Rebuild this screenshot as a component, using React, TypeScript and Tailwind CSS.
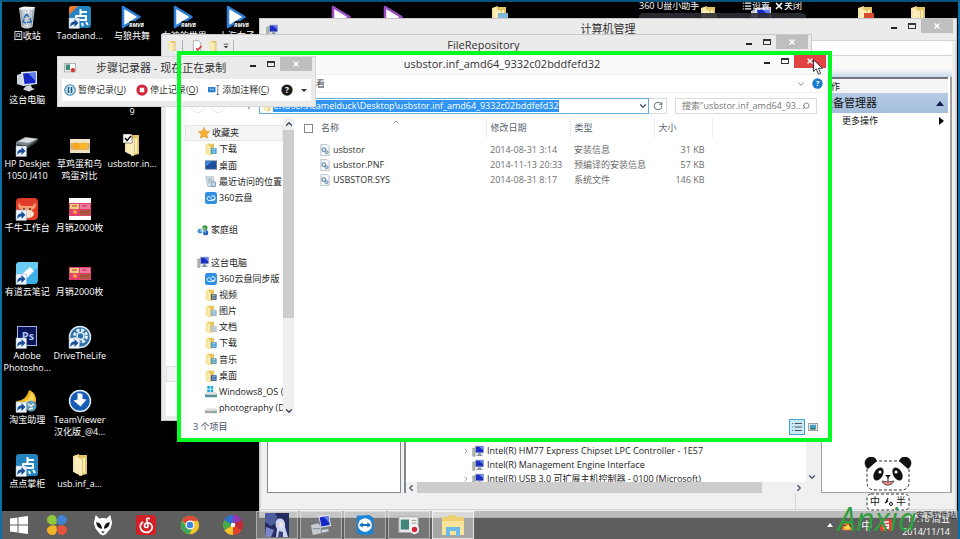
import type { ReactNode } from 'react';
import { ChevronDown, ChevronLeft, ChevronRight, ChevronUp, List, RotateCw, Search, X, ArrowLeft, ArrowRight, ArrowUp } from 'lucide-react';

interface DesktopItem {
    label: string;
    icon: ReactNode;
}

interface TreeItem {
    label: string;
    icon: ReactNode;
    level: number;
}

interface FileRow {
    name: string;
    date: string;
    type: string;
    size: string;
}

const Shortcut = () => (
    <g>
        <rect x="1" y="13" width="10.500" height="10.500" fill="#eef4fa" stroke="#9ab" strokeWidth="0.5" />
        <path d="M2.500 22c-.5-4 1-5.500 4-5.500v-2.500l4 4-4 4v-2.500C5 19.500 3.500 20 2.500 22z" fill="#1b4f9c" />
    </g>
);

const RecycleBin = () => (
    <svg viewBox="0 0 24 24" className="size-6">
        <path d="M4 3l16-1-2.500 20-4 1.500h-4L6.500 22z" fill="#c3ccd2" />
        <path d="M4 3l5-1.500 11 .5-3 2.500-9 .5z" fill="#f2f5f7" />
        <path d="M5.500 5l2.500 16M18.500 5L16 21" stroke="#8b979f" strokeWidth="1" />
        <path d="M9 13l2.500-4 2.500 3M15 13l1 4-4 .5M11 18l-3-1 1-3" fill="none" stroke="#3273b5" strokeWidth="1.600" />
        <path d="M10 6l1 3M14 5l-1 3M12 20v2" stroke="#eef3f6" strokeWidth="1.500" />
    </svg>
);

const DianIcon = ({ ribbon }: { ribbon?: boolean }) => (
    <svg viewBox="0 0 24 24" className="size-6">
        <rect x="1" y="1" width="22" height="22" rx="3" fill="#2384bf" />
        <path d="M12.500 4v7M13 7h6M8 11h10v4H8zM14 18l1 3M18 17l2 3" fill="none" stroke="#fff" strokeWidth="2" strokeLinejoin="round" />
        {ribbon && <path d="M1 10V4a3 3 0 0 1 3-3h6z" fill="#ef7b2b" />}
        <Shortcut />
    </svg>
);

const VideoIcon = ({ color }: { color: string }) => (
    <svg viewBox="0 0 24 24" className="size-6">
        <path d="M3 2l16.500 10L3 22z" fill="#fff" stroke={color} strokeWidth="2.500" strokeLinejoin="round" />
        <path d="M10 16h14v6H8z" fill="#101010" />
        <text x="16.500" y="21.500" fontSize="5.500" fontStyle="italic" fontWeight="700" textAnchor="middle" fill="#fff">RMVB</text>
    </svg>
);

const ComputerIcon = ({ className = 'size-6' }: { className?: string }) => (
    <svg viewBox="0 0 24 24" className={className}>
        <path d="M2 6l6-2v13l-6-2z" fill="#cdd3da" />
        <path d="M6 3l16-1v13L8 17z" fill="#dfe5ea" />
        <path d="M8 4.500l12.500-1v10.500L9.500 15z" fill="#1427c4" />
        <path d="M13 4l7.500-.5V12z" fill="#5f7df0" />
        <path d="M11 17l5-1 1 3 3 1-6 2.500-6-2z" fill="#d2d7dd" />
    </svg>
);

const SmallComputerIcon = () => (
    <svg viewBox="0 0 16 16" className="size-3">
        <path d="M1 4h3v11H1z" fill="#b9c0b4" stroke="#7e857a" strokeWidth="0.800" />
        <rect x="4.500" y="1.500" width="11" height="9" fill="#1c2fc0" stroke="#a8b4c6" />
        <path d="M9 2h6v5z" fill="#6f8af0" />
        <path d="M8 11h4v2h2v1.500H6V13h2z" fill="#8c96a2" />
    </svg>
);

const PrinterIcon = () => (
    <svg viewBox="0 0 24 24" className="size-6">
        <path d="M1 9l9-5 13 1.500-1 3-10 7-11-2z" fill="#7e858a" />
        <path d="M3 8.500l8-4 11 1.500-9 4z" fill="#d9dde0" />
        <path d="M2 12l11 1.500 9-6" stroke="#2c3033" strokeWidth="1.300" fill="none" />
        <Shortcut />
    </svg>
);

const EggPhoto = () => (
    <svg viewBox="0 0 24 24" className="size-6">
        <rect x="2" y="6" width="20" height="14" fill="#d9b27c" />
        <rect x="2" y="6" width="20" height="4" fill="#f1e4cc" />
        <ellipse cx="8.500" cy="13" rx="4" ry="3.500" fill="#f4a71d" />
        <ellipse cx="15.500" cy="13" rx="4" ry="3.500" fill="#f9b827" />
        <path d="M2 17h20v3H2z" fill="#efe0c2" />
    </svg>
);

const FolderIcon = ({ checked, accent, className = 'size-6' }: { checked?: boolean; accent?: string; className?: string }) => (
    <svg viewBox="0 0 24 24" className={className}>
        <path d="M5 3l6-2v20l-6-2z" fill="#f5e3a0" />
        <path d="M10 2h9v19l-8 2z" fill="#e3c568" />
        <path d="M7 4l7 2v17l-7-3z" fill="#faedb9" />
        <path d="M15 5h2v15h-2z" fill="#f9efc8" />
        {accent && <path d="M11 8h10v12H11z" fill={accent} />}
        {checked && (
            <g>
                <rect x="3" y="1" width="9" height="9" fill="#fff" stroke="#222" strokeWidth="0.500" />
                <path d="M5 5l2 2.500L11 3" fill="none" stroke="#111" strokeWidth="1.500" />
            </g>
        )}
    </svg>
);

const BullIcon = () => (
    <svg viewBox="0 0 24 24" className="size-6">
        <rect x="1" y="1" width="22" height="22" rx="4" fill="#e03b2b" />
        <path d="M4 5c1 4 3 4 5 4h6c2 0 4 0 5-4 2 4 0 7-3 8l-1 6H8l-1-6C4 12 2 9 4 5z" fill="#f5a070" />
        <ellipse cx="13" cy="17" rx="6" ry="4" fill="#fbe0cd" />
        <path d="M8 12h2M14 12h2" stroke="#5c2012" strokeWidth="1.500" />
        <Shortcut />
    </svg>
);

const PosterIcon = ({ tall }: { tall?: boolean }) => (
    <svg viewBox="0 0 24 24" className="size-6">
        {tall && <rect x="1" y="1" width="22" height="22" fill="#fff" />}
        <rect x="1" y="6" width="22" height="13" fill="#e2416f" />
        <rect x="2" y="7" width="9" height="5" fill="#f1d27a" />
        <rect x="12" y="7" width="10" height="5" fill="#f07aa0" />
        <rect x="12" y="13" width="10" height="5" fill="#a0603c" />
        <circle cx="7" cy="15" r="2" fill="#f4a43c" />
        <path d="M4 9h5M14 9h5M13 15h8" stroke="#c42c50" strokeWidth="1" />
    </svg>
);

const NoteIcon = () => (
    <svg viewBox="0 0 24 24" className="size-6">
        <path d="M5 1h18v18a4 4 0 0 1-4 4H1V5a4 4 0 0 1 4-4z" fill="#3bb1e8" />
        <path d="M5 1h18v6L1 17V5a4 4 0 0 1 4-4z" fill="#6accf3" />
        <path d="M15 6l4 4-8 8-5-4z" fill="#fff" />
        <Shortcut />
    </svg>
);

const PhotoshopIcon = () => (
    <svg viewBox="0 0 24 24" className="size-6">
        <rect x="2.500" y="1.500" width="19" height="19" fill="#0c1459" stroke="#9fb4ea" strokeWidth="1" />
        <text x="13" y="15" fontSize="11" fontWeight="700" textAnchor="middle" fill="#a9c3f7" fontFamily="Open Sans">Ps</text>
        <Shortcut />
    </svg>
);

const DriveIcon = () => (
    <svg viewBox="0 0 24 24" className="size-6">
        <circle cx="12" cy="12" r="10.500" fill="#2d74ae" stroke="#dce9f3" strokeWidth="1.500" />
        <circle cx="12.500" cy="11" r="6" fill="none" stroke="#e6f0f8" strokeWidth="3" strokeDasharray="3 1.700" />
        <circle cx="12.500" cy="11" r="3.500" fill="none" stroke="#e6f0f8" strokeWidth="1.500" />
        <Shortcut />
    </svg>
);

const HelperIcon = () => (
    <svg viewBox="0 0 24 24" className="size-6">
        <path d="M1 12C8 12 12 8 14 1c6 2 9 9 6 14l-6 3-10-1z" fill="#f4b41d" />
        <path d="M9 12c5-1 7-5 7-9 4 4 4 8 1 12z" fill="#ffd95b" />
        <circle cx="16" cy="17" r="5.500" fill="#5e9cc7" />
        <path d="M13 15l3 2 3-2M14 20l4-1" stroke="#fff3c4" strokeWidth="1.500" fill="none" />
        <Shortcut />
    </svg>
);

const RemoteIcon = () => (
    <svg viewBox="0 0 24 24" className="size-6">
        <circle cx="12" cy="12" r="10.500" fill="#155cb5" stroke="#dfe9f5" strokeWidth="1.500" />
        <path d="M9.500 4l5 1v5l4 .5-6 7-7-6 4-1z" fill="#fff" />
    </svg>
);

const CloudDiskIcon = () => (
    <svg viewBox="0 0 16 16" className="size-3">
        <rect width="16" height="16" rx="3" fill="#2f8fe2" />
        <path d="M13 9.500A3 3 0 0 1 8.500 9L7 7a2.500 2.500 0 1 0-1.500 4.200h5A3 3 0 0 0 10.500 5C9 5 8 6 8 6" fill="none" stroke="#fff" strokeWidth="1.300" />
    </svg>
);

const StarIcon = () => (
    <svg viewBox="0 0 16 16" className="size-3">
        <path d="M8 0.500l2.300 5 5.200.6-3.900 3.600 1.100 5.300L8 12.300 3.300 15l1.100-5.300L.5 6.100l5.200-.6z" fill="#f8b52c" stroke="#db8a1a" strokeWidth="0.800" />
    </svg>
);

const TreeFolder = ({ color }: { color: string }) => (
    <svg viewBox="0 0 16 16" className="size-3">
        <path d="M1 1.500L6 0v16l-5-1.500z" fill="#f6e193" />
        <path d="M5 1h7v13.500L5 16z" fill="#e6c35c" />
        <path d="M3 3l4 1v11.500L3 14z" fill="#f9eaae" />
        <path d="M8 7h7.500v7.500H8z" fill={color} />
        <path d="M9.500 9h4.500M9.500 12h4.500" stroke="#dce8f2" strokeWidth="1" />
    </svg>
);

const ScreenIcon = () => (
    <svg viewBox="0 0 16 16" className="size-3">
        <rect x="0.500" y="2.500" width="15" height="11" fill="#1d4f9e" stroke="#5b7390" strokeWidth="1" />
        <path d="M1 3h9l-9 7z" fill="#3d86d8" />
    </svg>
);

const RecentIcon = () => (
    <svg viewBox="0 0 16 16" className="size-3">
        <path d="M1 1h10l1 13H4z" fill="#dbe6ee" stroke="#8da2b2" strokeWidth="0.800" />
        <path d="M3.500 4h6M4 6.500h6M4.500 9h3" stroke="#7f97a8" />
        <path d="M9 8h5v6H8z" fill="#c2dcec" stroke="#6d8ea6" />
    </svg>
);

const HomegroupIcon = () => (
    <svg viewBox="0 0 16 16" className="size-3">
        <circle cx="10.500" cy="5" r="3.500" fill="#3f9142" />
        <circle cx="4" cy="9.500" r="3.300" fill="#4a8fd0" />
        <circle cx="11.500" cy="11.500" r="3.500" fill="#2663b5" />
        <path d="M4 9l6-4 1.500 6z" fill="none" stroke="#dff" strokeWidth="0.800" />
    </svg>
);

const DiskIcon = ({ system }: { system?: boolean }) => (
    <svg viewBox="0 0 16 16" className="size-3">
        {system && <path d="M3 0h3.500v3.500H3zM7.500 0H11v3.500H7.500zM3 4.500h3.500V8H3zM7.500 4.500H11V8H7.500z" fill="#19a7dd" />}
        <path d="M2 9h12l2 2v4H0v-4z" fill={system ? '#5d8fa3' : '#a5a8aa'} />
        <path d="M2 9h12l1.500 2.500H.5z" fill="#dfe3e5" />
        <path d="M11 13h3" stroke="#3fae59" strokeWidth="1.200" />
    </svg>
);

const FileIcon = () => (
    <svg viewBox="0 0 16 16" className="size-3">
        <path d="M2.500.5h8l3 3v12h-11z" fill="#f6fafc" stroke="#9fadb8" />
        <circle cx="6.500" cy="7.500" r="2.500" fill="#dfeaf2" stroke="#6d8da4" strokeWidth="1.600" />
        <circle cx="10" cy="11" r="2" fill="#c5d8e6" stroke="#5c86a8" strokeWidth="1.200" />
    </svg>
);

const HelpIcon = ({ color, className }: { color: string; className: string }) => (
    <svg viewBox="0 0 16 16" className={className}>
        <circle cx="8" cy="8" r="7.500" fill={color} />
        <text x="8" y="12" fontSize="11" fontWeight="700" textAnchor="middle" fill="#fff" fontFamily="Open Sans">?</text>
    </svg>
);

const desktopColumns: (DesktopItem | null)[][] = [
    [
        { label: '回收站', icon: <RecycleBin /> },
        { label: '这台电脑', icon: <ComputerIcon /> },
        { label: 'HP Deskjet 1050 J410', icon: <PrinterIcon /> },
        { label: '千牛工作台', icon: <BullIcon /> },
        { label: '有道云笔记', icon: <NoteIcon /> },
        { label: 'Adobe Photosho...', icon: <PhotoshopIcon /> },
        { label: '淘宝助理', icon: <HelperIcon /> },
        { label: '点点掌柜', icon: <DianIcon /> },
    ],
    [
        { label: 'Taodiand...', icon: <DianIcon ribbon /> },
        null,
        { label: '草鸡蛋和乌鸡蛋对比', icon: <EggPhoto /> },
        { label: '月销2000枚', icon: <PosterIcon tall /> },
        { label: '月销2000枚', icon: <PosterIcon /> },
        { label: 'DriveTheLife', icon: <DriveIcon /> },
        { label: 'TeamViewer 汉化版_@4...', icon: <RemoteIcon /> },
        { label: 'usb.inf_a...', icon: <FolderIcon /> },
    ],
    [
        { label: '与狼共舞', icon: <VideoIcon color="#2f7fd6" /> },
        { label: '\u00a0\n9', icon: null },
        { label: 'usbstor.in...', icon: <FolderIcon checked /> },
    ],
    [{ label: '女神的世界', icon: <VideoIcon color="#2f7fd6" /> }],
    [{ label: '上海女子', icon: <VideoIcon color="#2f7fd6" /> }],
    [],
    [{ label: '', icon: <VideoIcon color="#9a4fc0" /> }],
    [{ label: '', icon: <VideoIcon color="#9a4fc0" /> }],
    [],
    [{ label: '', icon: <FolderIcon accent="#7fb8d8" /> }],
    [],
    [],
    [],
    [{ label: '', icon: <FolderIcon accent="#b9c7a0" /> }],
    [{ label: '', icon: <ComputerIcon /> }],
    [],
    [{ label: '', icon: <FolderIcon accent="#d9482f" /> }],
    [{ label: '', icon: <FolderIcon /> }],
];

const sidebar: (TreeItem | null)[] = [
    { label: '收藏夹', icon: <StarIcon />, level: 0 },
    { label: '下载', icon: <TreeFolder color="#3a9bd6" />, level: 1 },
    { label: '桌面', icon: <ScreenIcon />, level: 1 },
    { label: '最近访问的位置', icon: <RecentIcon />, level: 1 },
    { label: '360云盘', icon: <CloudDiskIcon />, level: 1 },
    null,
    { label: '家庭组', icon: <HomegroupIcon />, level: 0 },
    null,
    { label: '这台电脑', icon: <SmallComputerIcon />, level: 0 },
    { label: '360云盘同步版', icon: <CloudDiskIcon />, level: 1 },
    { label: '视频', icon: <TreeFolder color="#47617a" />, level: 1 },
    { label: '图片', icon: <TreeFolder color="#86b4d4" />, level: 1 },
    { label: '文档', icon: <TreeFolder color="#b3bfc9" />, level: 1 },
    { label: '下载', icon: <TreeFolder color="#3a9bd6" />, level: 1 },
    { label: '音乐', icon: <TreeFolder color="#4f9ab8" />, level: 1 },
    { label: '桌面', icon: <TreeFolder color="#2a5ba8" />, level: 1 },
    { label: 'Windows8_OS (C:)', icon: <DiskIcon system />, level: 1 },
    { label: 'photography (D:)', icon: <DiskIcon />, level: 1 },
];

const files: FileRow[] = [
    { name: 'usbstor', date: '2014-08-31 3:14', type: '安装信息', size: '31 KB' },
    { name: 'usbstor.PNF', date: '2014-11-13 20:33', type: '预编译的安装信息', size: '57 KB' },
    { name: 'USBSTOR.SYS', date: '2014-08-31 8:17', type: '系统文件', size: '146 KB' },
];

const devices = [
    { label: 'Intel(R) HM77 Express Chipset LPC Controller - 1E57', open: true },
    { label: 'Intel(R) Management Engine Interface', open: false },
    { label: 'Intel(R) USB 3.0 可扩展主机控制器 - 0100 (Microsoft)', open: true },
];

interface ControlsProps {
    active?: boolean;
}

const WindowControls = ({ active }: ControlsProps) => (
    <div className="absolute top-0 right-[3px] flex h-3.5 items-stretch">
        <button aria-label="最小化" className="flex w-[18px] items-center justify-center">
            <span className="mt-1 h-0.5 w-1.5 bg-[#222]" />
        </button>
        <button aria-label="最大化" className="flex w-[18px] items-center justify-center">
            <span className="h-1.5 w-2 border border-t-2 border-[#333]" />
        </button>
        <button
            aria-label="关闭"
            className={active
                ? 'flex w-8 items-center justify-center bg-[#e04343] text-white'
                : 'flex w-8 items-center justify-center bg-[#bfbfbf] text-white'}
        >
            <X className="size-2" strokeWidth={4} />
        </button>
    </div>
);

const DesktopIcons = () => (
    <div className="grid grid-cols-18 pt-[5px] pr-4 pl-px">
        {desktopColumns.map((column, c) => (
            <div key={c} className="flex flex-col">
                {column.map((item, r) => (
                    <div key={r} className="flex h-16 flex-col items-center text-center text-[9px] leading-3 text-white">
                        <div className="h-[25px]">{item?.icon}</div>
                        <span className="w-full whitespace-pre-line">{item?.label}</span>
                    </div>
                ))}
            </div>
        ))}
    </div>
);

const ManagementWindow = () => (
    <section className="absolute top-[18px] left-[259px] flex h-[500px] w-[698px] flex-col border border-[#c9c9c9] bg-[#ebebeb]">
        <header className="relative flex h-[21px] items-center justify-center text-[11px] text-[#333]">
            <span className="absolute left-1.5"><SmallComputerIcon /></span>
            <h2>计算机管理</h2>
            <WindowControls />
        </header>
        <div className="flex min-h-0 flex-1 flex-col border border-[#d5d5d5] bg-[#f0f0f0] pr-[3px] pl-1.5">
            <div className="h-[15px] border-b border-[#d5d5d5] bg-white" />
            <div className="h-[21px] bg-linear-to-b from-[#fafafa] from-60% to-[#c8d8e6]" />
            <div className="flex min-h-0 flex-1 gap-[3px]">
                <div className="w-[134px] border border-[#828790] bg-white" />
                <div className="flex w-[414px] flex-col border-l-2 border-[#828790] bg-white">
                    <div className="flex min-h-0 flex-1">
                        <ul className="flex min-w-0 flex-1 flex-col justify-end overflow-hidden pl-14 text-[9px] text-[#222]">
                            {devices.map((device) => (
                                <li key={device.label} className="flex h-3.5 shrink-0 items-center gap-0.5 whitespace-nowrap last:-mb-1">
                                    <ChevronRight className={device.open ? 'size-2 text-gray-500' : 'size-2 opacity-0'} />
                                    <SmallComputerIcon />
                                    <span className="ml-px">{device.label}</span>
                                </li>
                            ))}
                        </ul>
                        <div className="flex w-3 items-end justify-center bg-[#f0f0f0]">
                            <ChevronDown className="size-2.5 text-gray-600" strokeWidth={3} />
                        </div>
                    </div>
                    <div className="flex h-[11px] items-center justify-between bg-[#f0f0f0] pr-3.5 text-gray-600">
                        <ChevronLeft className="size-2.5" strokeWidth={3} />
                        <div className="mr-auto ml-px h-full w-[345px] bg-[#cdcdcd]" />
                        <ChevronRight className="size-2.5" strokeWidth={3} />
                    </div>
                </div>
                <div className="flex min-w-0 flex-1 flex-col border-r-2 border-b border-l border-[#a0a0a0] bg-white pr-0.5 text-[9px] text-[#111]">
                    <div className="h-4 border-t-2 border-[#70757c] bg-[#f4f4f4] leading-4">操作</div>
                    <div className="flex h-5 items-center justify-between bg-linear-to-b from-[#b4cbe4] to-[#a3bddb] text-[11px]">
                        设备管理器
                        <svg viewBox="0 0 8 5" className="mr-1 h-[5px] w-2"><path d="M0 5l4-5 4 5z" fill="#10204a" /></svg>
                    </div>
                    <button className="flex h-4 items-center justify-between pr-1 pl-5">
                        更多操作
                        <svg viewBox="0 0 5 8" className="h-2 w-[5px]"><path d="M0 0l5 4-5 4z" fill="#000" /></svg>
                    </button>
                </div>
            </div>
            <div className="flex h-4">
                <div className="w-[529px] border-r border-[#d7d7d7]" />
            </div>
        </div>
        <div className="h-[7px] bg-[#ebebeb]" />
    </section>
);

const RepositoryWindow = () => (
    <section className="absolute top-[34px] left-[161px] flex h-[387px] w-[651px] flex-col border border-[#c9c9c9] bg-[#ebebeb] p-1 pt-0">
        <header className="relative -mr-1 flex h-[21px] items-center justify-center pr-2.5 text-[11px] text-[#333]">
            <div className="absolute left-0 flex items-center gap-1">
                <FolderIcon className="size-3" />
                <span className="h-3 w-px bg-[#aaa]" />
                <svg viewBox="0 0 16 16" className="ml-1 size-3">
                    <path d="M3 1h7l3 3v11H3z" fill="#fff" stroke="#999" />
                    <path d="M7 11l2 2.500L14 8" fill="none" stroke="#d33" strokeWidth="2" />
                </svg>
                <FolderIcon className="size-3" />
                <svg viewBox="0 0 8 8" className="size-1.5"><path d="M1 1h6v1H1zM1 4h6L4 7z" fill="#333" /></svg>
                <span className="h-3 w-px bg-[#bbb]" />
            </div>
            <h2>FileRepository</h2>
            <WindowControls />
        </header>
        <div className="flex flex-1 flex-col justify-end bg-white pb-[34px]">
            <div className="h-4 border border-[#e2e2e2] bg-[#f5f5f5]" />
        </div>
    </section>
);

const ExplorerWindow = () => (
    <section className="absolute top-[54px] left-[181px] flex h-[384px] w-[648px] flex-col border-x-4 border-b-2 border-[#f6f9f9] bg-white">
        <header className="relative -mr-1 flex h-5 items-center justify-center bg-[#fafafa] pr-2.5 text-[11px] text-[#333]">
            <h2>usbstor.inf_amd64_9332c02bddfefd32</h2>
            <WindowControls active />
        </header>
        <div className="flex h-[19px] items-center gap-1.5 border-y border-[#efefef] pr-0.5 pl-[122px] text-[9px] text-[#444]">
            <button>查看</button>
            <ChevronDown className="ml-auto size-2.5 text-gray-500" />
            <button aria-label="帮助"><HelpIcon color="#1979ca" className="size-[11px]" /></button>
        </div>
        <div className="flex h-[25px] items-center pr-2 pl-1.5 text-[9px]">
            <button aria-label="后退" className="flex size-3.5 items-center justify-center rounded-full border border-gray-200 text-gray-300"><ArrowLeft className="size-2" /></button>
            <button aria-label="前进" className="ml-1.5 flex size-3.5 items-center justify-center rounded-full border border-gray-200 text-gray-300"><ArrowRight className="size-2" /></button>
            <button aria-label="上移" className="ml-4 flex size-4 items-center justify-center text-gray-600"><ArrowUp className="size-2.5" /></button>
            <div className="ml-0.5 flex h-4 min-w-0 flex-1 items-center border border-[#62aed6] pl-px">
                <FolderIcon className="size-3" />
                <input
                    aria-label="地址"
                    readOnly
                    value="C:\Users\camelduck\Desktop\usbstor.inf_amd64_9332c02bddfefd32"
                    className="field-sizing-content h-3 bg-[#3095f5] text-white outline-none"
                />
                <ChevronDown className="ml-auto size-2.5 text-gray-600" strokeWidth={3} />
            </div>
            <button aria-label="刷新" className="flex h-4 w-[18px] items-center justify-center border border-l-0 border-[#ddd] text-gray-600"><RotateCw className="size-2.5" /></button>
            <div className="ml-2 flex h-4 w-[142px] items-center border border-[#dcdcdc] px-1.5">
                <input aria-label="搜索" placeholder={'搜索"usbstor.inf_amd64_93...'} className="min-w-0 flex-1 outline-none placeholder:text-[#777]" />
                <Search className="size-2 -scale-x-100 text-gray-600" />
            </div>
        </div>
        <div className="flex min-h-0 flex-1">
            <nav className="flex w-[98px] flex-col justify-between overflow-hidden pt-[7px] text-[9px] text-[#222]">
                {sidebar.map((item, i) => (
                    <a
                        key={i}
                        href="#"
                        className={i === 0
                            ? 'flex h-4 shrink-0 items-center gap-0.5 border border-[#e5e5e5] bg-[#f5f5f5] pl-3 whitespace-nowrap'
                            : item?.level === 0
                                ? 'flex h-4 shrink-0 items-center gap-0.5 pl-3 whitespace-nowrap'
                                : 'flex h-4 shrink-0 items-center gap-0.5 pl-5 whitespace-nowrap'}
                    >
                        <span className="shrink-0">{item?.icon}</span>
                        {item?.label}
                    </a>
                ))}
            </nav>
            <div className="flex w-[11px] flex-col items-center bg-[#f0f0f0] text-gray-700">
                <ChevronUp className="my-px size-2.5" strokeWidth={3} />
                <div className="h-[188px] w-full bg-[#cdcdcd]" />
                <ChevronDown className="mt-auto size-2.5" strokeWidth={3} />
            </div>
            <div className="relative flex-1 pl-[9px] text-[9px]">
                <ChevronUp className="absolute top-0 left-[98px] size-2 text-gray-500" />
                <table className="w-[410px] table-fixed text-left text-[#6d6d6d]">
                    <thead>
                        <tr className="h-5 text-[#5a6570]">
                            <th className="w-[18px] pl-px"><input type="checkbox" aria-label="全选" className="block size-[9px] appearance-none border border-[#888]" /></th>
                            <th className="w-[165px] font-normal">名称</th>
                            <th className="w-[84px] border-l border-[#e8eef2] pl-1 font-normal">修改日期</th>
                            <th className="w-[84px] border-l border-[#e8eef2] pl-1 font-normal">类型</th>
                            <th className="border-x border-[#e8eef2] pl-1 font-normal">大小</th>
                        </tr>
                        <tr className="h-1" />
                    </thead>
                    <tbody>
                        {files.map((file) => (
                            <tr key={file.name} className="h-[15px]">
                                <td />
                                <td className="text-[#333]">
                                    <span className="-ml-0.5 flex items-center gap-0.5"><FileIcon />{file.name}</span>
                                </td>
                                <td className="pl-1 whitespace-nowrap">{file.date}</td>
                                <td className="pl-1 whitespace-nowrap">{file.type}</td>
                                <td className="pr-2 text-right whitespace-nowrap">{file.size}</td>
                            </tr>
                        ))}
                    </tbody>
                </table>
            </div>
        </div>
        <footer className="flex h-5 items-center pt-0.5 pr-1 pl-2 text-[9px] text-[#44506a]">
            <span>3 个项目</span>
            <button aria-label="详细信息" className="ml-auto flex size-4 items-center justify-center border border-[#3fa4cf] bg-[#c9e8f6]"><List className="size-3 text-gray-600" /></button>
            <button aria-label="大图标" className="flex size-4 items-center justify-center">
                <svg viewBox="0 0 12 10" className="h-2 w-2.5"><rect x="0.500" y="0.500" width="11" height="9" fill="#fff" stroke="#888" /><path d="M2 2h8v6H2z" fill="#4b9cc4" /><path d="M2 8l3-3 5 3z" fill="#35754a" /></svg>
            </button>
        </footer>
    </section>
);

const RecorderWindow = () => (
    <section className="absolute top-14 left-[57px] flex h-[51px] w-[259px] flex-col border border-[#d8d8d8] bg-[#ebebeb] px-1 pb-[5px] text-[#333]">
        <header className="relative -mr-1 flex h-[22px] items-center text-[11px]">
            <svg viewBox="0 0 16 14" className="mx-0.5 h-2.5 w-3">
                <rect x="0.500" y="0.500" width="15" height="12" fill="#fff" stroke="#999" />
                <path d="M2 2h6v8H2z" fill="#3c8f76" />
                <circle cx="12" cy="10" r="3" fill="#d33" />
            </svg>
            <h2 className="ml-[18px]">步骤记录器 - 现在正在录制</h2>
            <WindowControls />
        </header>
        <div className="flex flex-1 items-center bg-white pr-1 pl-0.5 text-[9px] whitespace-nowrap">
            <button className="flex items-center gap-0.5">
                <svg viewBox="0 0 16 16" className="size-3"><circle cx="8" cy="8" r="7" fill="#c8e0ee" stroke="#3d82a8" strokeWidth="1.500" /><path d="M5 4h2v8H5zM9 4h2v8H9z" fill="#1f5f8a" /></svg>
                <span>暂停记录(<u>U</u>)</span>
            </button>
            <button className="ml-2.5 flex items-center gap-0.5">
                <svg viewBox="0 0 16 16" className="size-3"><circle cx="8" cy="8" r="7.500" fill="#d5243a" /><path d="M5 5h6v6H5z" fill="#fff" /></svg>
                <span>停止记录(<u>O</u>)</span>
            </button>
            <button className="ml-2.5 flex items-center gap-0.5">
                <svg viewBox="0 0 16 16" className="size-3"><path d="M0 4h10v7H0z" fill="#2a7fd0" /><path d="M11 2h4M13 2v12M11 14h4" stroke="#555" fill="none" /><path d="M2 7h6" stroke="#cfe4f7" /></svg>
                <span>添加注释(<u>C</u>)</span>
            </button>
            <button aria-label="帮助" className="ml-auto flex items-center gap-2">
                <HelpIcon color="#1c1c1c" className="size-3" />
                <svg viewBox="0 0 8 4" className="h-[3px] w-1.5"><path d="M0 0h8L4 4z" fill="#333" /></svg>
            </button>
        </div>
    </section>
);

const Taskbar = () => (
    <footer className="absolute inset-x-0 bottom-0 flex h-7 items-center bg-[#9c9c9c]/60 pr-2.5">
        <button aria-label="开始" className="flex w-[38px] justify-center">
            <svg viewBox="0 0 20 20" className="size-5"><path d="M1 3.500l7.500-1v7H1zM9.500 2.300L19 1v8.500H9.500zM1 10.500h7.500v7L1 16.500zM9.500 10.500H19V19l-9.500-1.300z" fill="#fff" /></svg>
        </button>
        <a href="#" aria-label="360" className="flex w-[38px] justify-center">
            <svg viewBox="0 0 24 24" className="size-[22px]">
                <path d="M11 11C5 13 1 10 1 6c0-3 3-5 6-5 4 0 6 5 4 10z" fill="#8fc63d" />
                <path d="M13 11c-2-6 0-9 4-10 3 0 6 3 6 5 0 4-5 7-10 5z" fill="#3f83d3" />
                <path d="M11 13c-4-2-9 0-10 4 0 3 2 6 6 6s6-5 4-10z" fill="#f0b429" />
                <path d="M13 13c5-2 10 0 10 4 0 3-3 6-6 6-4-1-6-5-4-10z" fill="#e5533d" />
            </svg>
        </a>
        <a href="#" aria-label="foobar2000" className="ml-1.5 flex w-[42px] justify-center">
            <svg viewBox="0 0 24 24" className="size-[22px]">
                <path d="M4 1l4 4c2-1 6-1 8 0l4-4 2 9-2 6-5 6-3 1.500L9 22l-5-6-2-6z" fill="#fff" />
                <path d="M4.500 9c4 0 6 3 6.500 7-4 0-6-3-6.500-7zM19.500 9c-4 0-6 3-6.500 7 4 0 6-3 6.500-7zM10 19h4l-2 2z" fill="#111" />
            </svg>
        </a>
        <a href="#" aria-label="网易云音乐" className="flex w-11 justify-center">
            <svg viewBox="0 0 24 24" className="size-[22px]">
                <rect x="1" y="1" width="22" height="22" rx="4" fill="#d31f26" />
                <path d="M15.500 5c-2-1-3 0-2.500 2l1.300 6c.2 2-3.800 2.500-4 0-.2-3 4-5 7-2 4 5-1 9-5 9-6 0-9-7-4-11" fill="none" stroke="#fff" strokeWidth="1.800" strokeLinecap="round" />
            </svg>
        </a>
        <a href="#" aria-label="Chrome" className="flex w-11 justify-center">
            <svg viewBox="0 0 24 24" className="size-5">
                <circle cx="12" cy="12" r="11" fill="#f3c62f" />
                <path d="M2.500 6.500A11 11 0 0 1 22 7H12a5 5 0 0 0-5 4z" fill="#dd4a3b" />
                <path d="M2.500 6.500A11 11 0 0 0 11 23l4-7a5 5 0 0 1-7-2z" fill="#3fa656" />
                <circle cx="12" cy="12" r="4.700" fill="#3f86df" stroke="#fff" strokeWidth="1.400" />
            </svg>
        </a>
        <a href="#" aria-label="影音" className="flex w-[42px] justify-center">
            <svg viewBox="0 0 24 24" className="size-[22px]">
                <path d="M12 12V1a11 11 0 0 1 9.500 5.500z" fill="#9437b5" /><path d="M12 12l9.500-5.500a11 11 0 0 1 0 11z" fill="#c22a35" /><path d="M12 12l9.500 5.500A11 11 0 0 1 12 23z" fill="#e0402b" /><path d="M12 12v11a11 11 0 0 1-9.500-5.500z" fill="#f7c52b" /><path d="M12 12l-9.500 5.500a11 11 0 0 1 0-11z" fill="#46ab46" /><path d="M12 12L2.500 6.500A11 11 0 0 1 12 1z" fill="#2f6fd0" /><circle cx="12" cy="12" r="2.500" fill="#fff" />
            </svg>
        </a>
        <div className="ml-0.5 flex h-full gap-0.5">
            <button aria-label="游戏" className="flex w-[42px] items-center justify-center border border-white/40 bg-white/15">
                <svg viewBox="0 0 24 24" className="size-6"><rect width="24" height="24" fill="#252b5e" /><path d="M0 0h10l4 8-8 5-6-4z" fill="#4f5da0" /><path d="M13 6c5-2 8 3 7 8l3 10H11l1-8c-2-3-2-8 1-10z" fill="#cdd5ef" /><path d="M14 9c2-1 4 1 4 4l-3 2z" fill="#f6e4e4" /><path d="M1 14l8 3-3 7H0z" fill="#7b88c8" /><path d="M14 18l4 1v5h-5z" fill="#39427e" /></svg>
            </button>
            <button aria-label="计算机管理" className="flex w-[42px] items-center justify-center border border-white/40 bg-white/15">
                <svg viewBox="0 0 24 24" className="size-[22px]"><path d="M9 2l12-1 2 12-11 2z" fill="#dfe5ea" /><path d="M10.500 3.500L20 2.500l1.500 9.500-9 1.500z" fill="#1427c4" /><path d="M15 3l5-.5 1 7z" fill="#5f7df0" /><path d="M1 12l8-2 3 4v7l-9 2z" fill="#c4cbd1" /><path d="M3 16h8M12 17l8-1 1 3-8 2z" stroke="#7d868e" fill="#d2d7dd" /></svg>
            </button>
            <button aria-label="TeamViewer" className="flex w-[42px] items-center justify-center border border-white/40 bg-white/15">
                <svg viewBox="0 0 24 24" className="size-[22px]"><path d="M3 2l14-1 4 3v18l-14 1-4-3z" fill="#1b84d6" /><circle cx="12" cy="12" r="7.500" fill="#fff" /><path d="M5.500 12l4-3v2h5V9l4 3-4 3v-2h-5v2z" fill="#1b6fb8" /></svg>
            </button>
            <button aria-label="步骤记录器" className="flex w-[42px] items-center justify-center border border-white/40 bg-white/15">
                <svg viewBox="0 0 24 24" className="size-[22px]"><rect x="1" y="3" width="21" height="17" fill="#eee" stroke="#aaa" /><path d="M3 6h9v11H3z" fill="#3f8678" /><path d="M15 7h5M15 10h5" stroke="#999" /><circle cx="18" cy="17" r="5" fill="#f6f6f6" /><circle cx="18" cy="17" r="3" fill="#d4263a" /></svg>
            </button>
            <button aria-label="文件资源管理器" className="flex w-[42px] items-center justify-center border border-white/70 bg-white/45">
                <svg viewBox="0 0 24 24" className="size-6"><path d="M1 4h6l1-2h6l1 2h8v18H1z" fill="#efd071" /><path d="M1 8h22v14H1z" fill="#f8e49b" /><path d="M5 23v-9h14v9h-4v-5H9v5z" fill="#6bb9e6" /></svg>
            </button>
        </div>
        <div className="ml-auto flex items-center gap-1 text-[9px] leading-[13px] text-white">
            <svg viewBox="0 0 6 4" className="h-1 w-1.5"><path d="M0 4l3-4 3 4z" fill="#fff" /></svg>
            <svg viewBox="0 0 16 16" className="ml-1 size-3"><path d="M4 1l4 4 5-1-1 5 3 6H1l2-7z" fill="#ec7a2b" /><path d="M5 8h6l2 6H4z" fill="#f7cf51" /><path d="M3 8l4 1M11 7l2 3" stroke="#6a2010" strokeWidth="1.500" /></svg>
            <span className="ml-1 text-[11px]">中</span>
            <svg viewBox="0 0 16 16" className="ml-1 size-3"><rect width="16" height="16" rx="2" fill="#df4433" /><path d="M12 4H5v4h6v4H4" stroke="#fff" strokeWidth="2" fill="none" /></svg>
            <div className="ml-1.5 text-right">
                <div>17:18 周五</div>
                <div>2014/11/14</div>
            </div>
        </div>
    </footer>
);

const Panda = () => (
    <svg viewBox="0 0 48 54" className="absolute right-12 bottom-7 h-[54px] w-12">
        <rect x="3" y="4" width="42" height="29" rx="7" fill="#fff" stroke="#333" strokeDasharray="3 2" />
        <path d="M1 8a6 6 0 0 1 12-4L4 12a6 6 0 0 1-3-4zM47 8a6 6 0 0 0-12-4l9 8a6 6 0 0 0 3-4z" fill="#111" />
        <ellipse cx="14.500" cy="17" rx="4.500" ry="7" fill="#111" transform="rotate(28 14.500 17)" />
        <ellipse cx="33.500" cy="17" rx="4.500" ry="7" fill="#111" transform="rotate(-28 33.500 17)" />
        <circle cx="16" cy="15" r="1.500" fill="#fff" />
        <circle cx="32" cy="15" r="1.500" fill="#fff" />
        <path d="M21 18h6l-3 3z" fill="#111" />
        <path d="M18 24c4 1 8 1 12 0-2 5-10 6-12 0z" fill="#e88" stroke="#333" strokeWidth="0.800" />
        <path d="M24 20v4" stroke="#111" />
        <rect x="3" y="37" width="42" height="16" rx="4" fill="#fff" stroke="#333" strokeDasharray="3 2" />
        <text x="11" y="48" fontSize="10" textAnchor="middle" fill="#111">中</text>
        <path d="M24 41l-2 4M21 46l3-2" stroke="#111" strokeWidth="1.200" />
        <circle cx="27" cy="47" r="1.500" fill="none" stroke="#111" />
        <text x="37" y="48" fontSize="10" textAnchor="middle" fill="#111">半</text>
    </svg>
);

export default function App() {
    return (
        <main className="relative h-screen min-h-[539px] overflow-hidden bg-black font-['Open_Sans','Noto_Sans_CJK_SC',sans-serif]">
            <DesktopIcons />
            <div className="absolute top-0 right-[154px] w-[167px] text-[9px] leading-[11px] text-white">
                <div className="flex items-center whitespace-nowrap">
                    <span>360 U盘小助手</span>
                    <button className="ml-auto flex items-center"><List className="size-2.5" strokeWidth={3} />设置</button>
                    <button className="mr-1 ml-1 flex items-center"><X className="size-2.5" strokeWidth={4} />关闭</button>
                </div>
                <div className="mt-0.5 h-[5px] rounded-t bg-[#2b2d33]/90" />
            </div>
            <ManagementWindow />
            <RepositoryWindow />
            <ExplorerWindow />
            <RecorderWindow />
            <div className="pointer-events-none absolute top-[51px] left-[177px] h-[391px] w-[655px] border-4 border-[#04fb23]" />
            <Taskbar />
            <Panda />
            {/* site watermark */}
            <div className="pointer-events-none absolute right-11 bottom-1 text-[32px] leading-8 text-[#2f9e3f] italic">Anxia</div>
            <div className="pointer-events-none absolute right-1 bottom-[18px] text-[8px] leading-3 text-[#222]">安下软件站</div>
            <svg viewBox="0 0 12 18" className="absolute top-[59px] left-[812px] h-4 w-3">
                <path d="M1 1v13l3-3 2.500 6 2.500-1-2.500-5.500h4.500z" fill="#fff" stroke="#223" strokeWidth="1" />
            </svg>
            <div className="pointer-events-none absolute inset-0 border-x-2 border-t-2 border-x-[#0e6ea6] border-t-[#07527c]" />
        </main>
    );
}
